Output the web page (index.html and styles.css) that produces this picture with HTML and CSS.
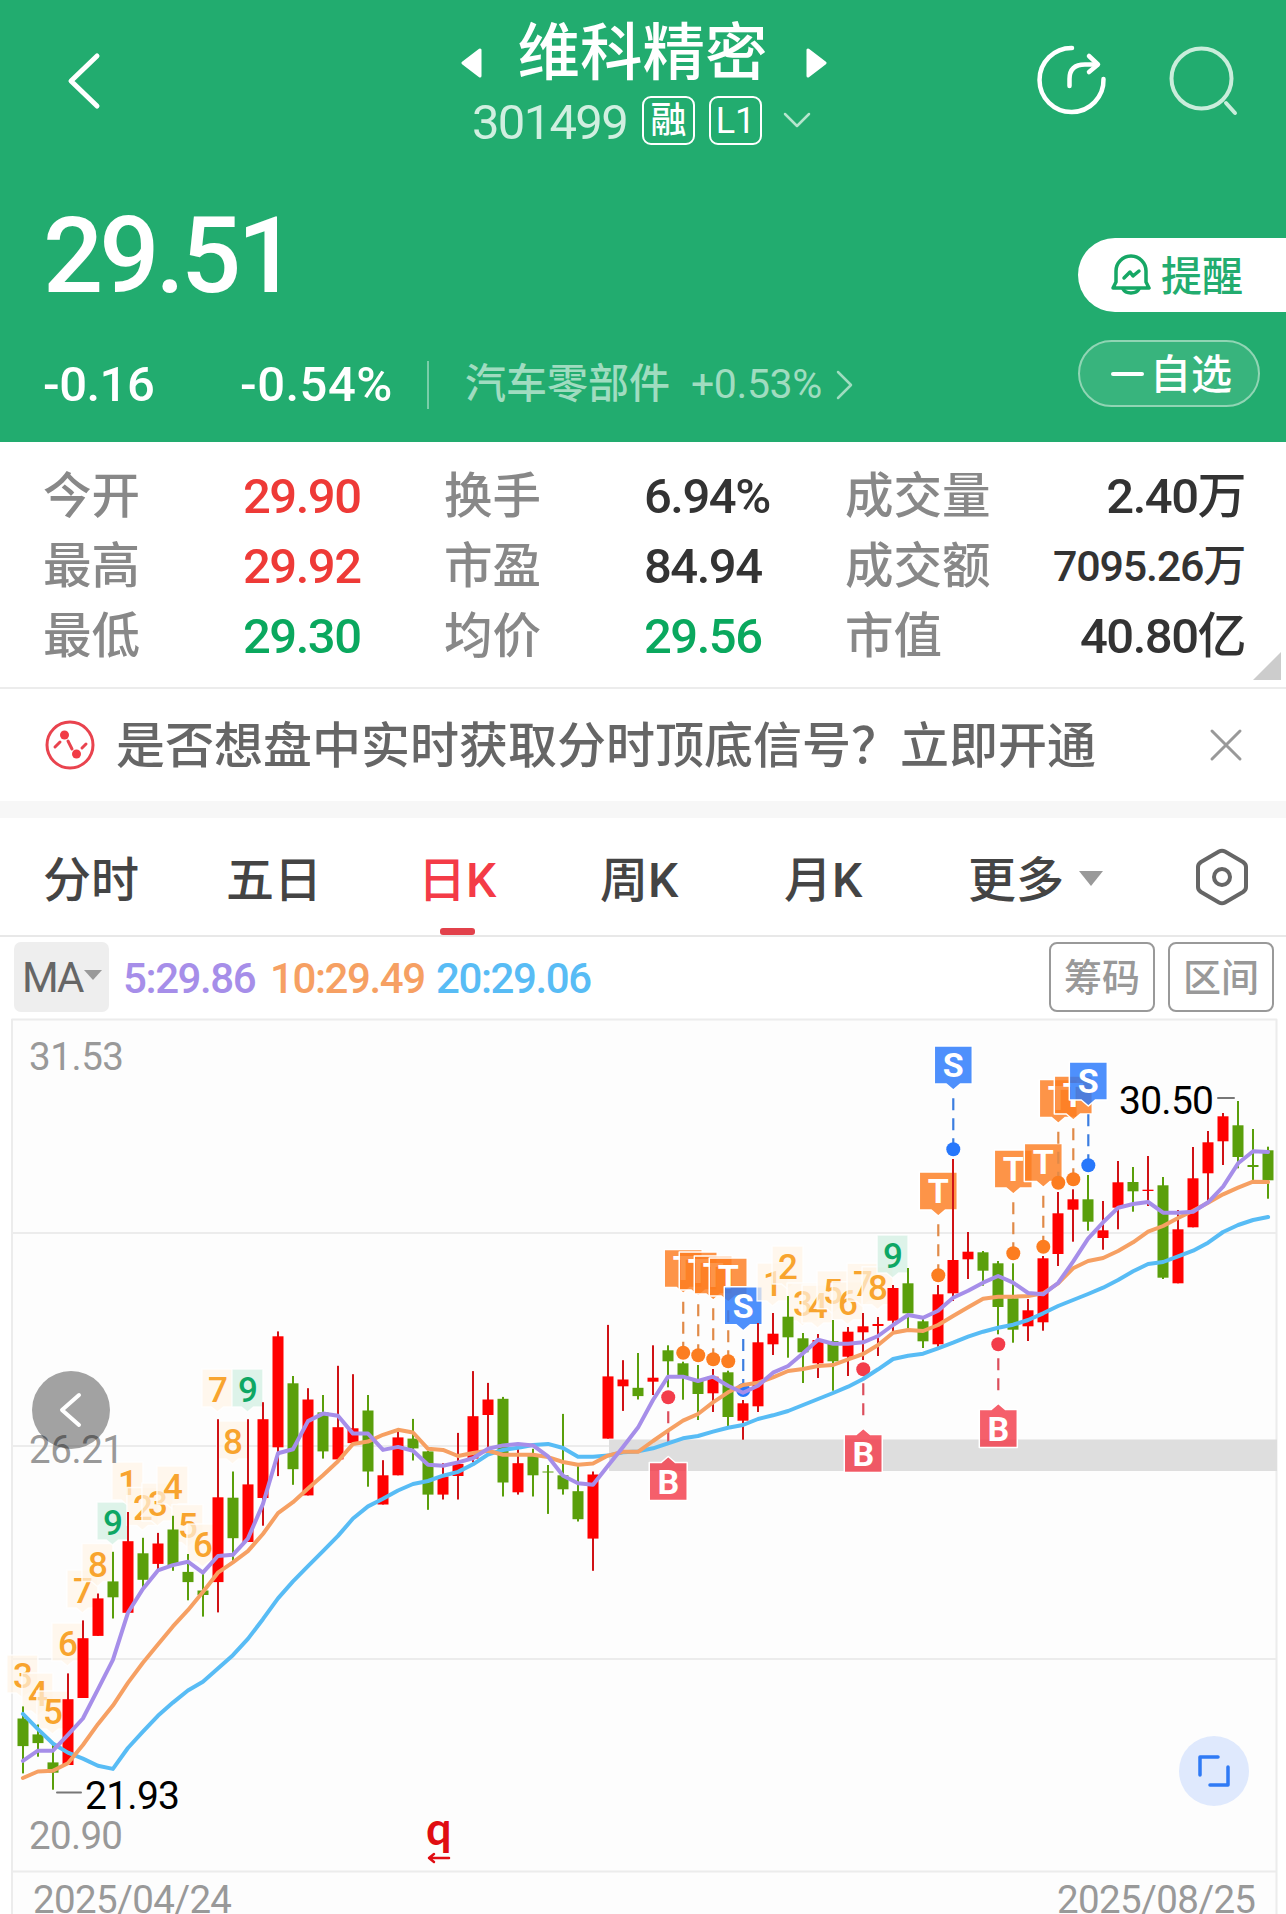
FILE: index.html
```html
<!DOCTYPE html>
<html lang="zh-CN">
<head>
  <meta charset="UTF-8">
  <meta name="viewport" content="width=device-width, initial-scale=1.0">
  <title>维科精密 301499</title>
  <link rel="stylesheet" href="styles.css">
</head>
<body>
  <header class="header">
    <div class="topbar">
      <svg class="back" width="40" height="66" viewBox="64 48 40 66"><path d="M97 56 L71 81 L97 106"/></svg>
      <div class="stock">
        <div class="stock-name">
          <svg width="21" height="30" viewBox="0 0 21 30"><path d="M19 2 V28 L2 15 Z"/></svg>
          <h1>维科精密</h1>
          <svg width="21" height="30" viewBox="0 0 21 30"><path d="M2 2 V28 L19 15 Z"/></svg>
        </div>
        <div class="stock-code">
          <span class="code">301499</span>
          <span class="tag">融</span>
          <span class="tag level">L1</span>
          <svg class="down" width="28" height="16" viewBox="0 0 28 16"><path d="M2 2 L14 14 L26 2"/></svg>
        </div>
      </div>
      <div class="actions">
        <svg class="share" width="70" height="70" viewBox="1036 46 70 70">
          <path d="M1071 49 A32 32 0 1 0 1102.500 80"/>
          <path d="M1068.500 87 V80 Q1068.500 65.500 1084 65.500 H1096"/>
          <path d="M1088 57 L1097 65.500 L1088 73"/>
        </svg>
        <svg class="search" width="70" height="72" viewBox="1167 44 70 72">
          <circle cx="1200.500" cy="77.500" r="30"/>
          <path d="M1225 102 L1234 112"/>
        </svg>
      </div>
    </div>

    <div class="quote">
      <div class="quote-left">
        <div class="price">29.51</div>
        <div class="change">
          <span class="diff">-0.16</span>
          <span class="percent">-0.54%</span>
          <div class="sector">
            <span>汽车零部件</span>
            <span class="sector-rate">+0.53%</span>
            <svg width="18" height="30" viewBox="0 0 18 30"><path d="M2 2 L15 15 L2 28"/></svg>
          </div>
        </div>
      </div>
      <div class="quote-right">
        <div class="btn-remind">
          <svg width="40" height="42" viewBox="0 0 40 42">
            <path d="M5 28 V17 A15 15 0 0 1 35 17 V28 L38 34 H2 Z"/>
            <path d="M12 35 A8.500 6 0 0 0 28 35"/>
            <path d="M13 24 L19 18 L22 22 L28 17"/>
          </svg>
          <span>提醒</span>
        </div>
        <div class="btn-fav"><i class="minus"></i><span>自选</span></div>
      </div>
    </div>
  </header>

  <section class="stats">
    <span class="label">今开</span><span class="up">29.90</span>
    <span class="label">换手</span><span>6.94%</span>
    <span class="label">成交量</span><span class="right">2.40万</span>
    <span class="label">最高</span><span class="up">29.92</span>
    <span class="label">市盈</span><span>84.94</span>
    <span class="label">成交额</span><span class="right small">7095.26万</span>
    <span class="label">最低</span><span class="fall">29.30</span>
    <span class="label">均价</span><span class="fall">29.56</span>
    <span class="label">市值</span><span class="right">40.80亿</span>
    <i class="corner"></i>
  </section>

  <section class="promo">
    <svg class="promo-icon" width="50" height="50" viewBox="45 720 50 50">
      <circle class="ring" cx="70" cy="745" r="23"/>
      <path d="M55 747 L60 742 M68 741 L72 749 M82 748 L86 744"/>
      <circle cx="64.500" cy="735" r="4.500"/>
      <circle cx="76.500" cy="754" r="4.500"/>
    </svg>
    <span class="promo-text">是否想盘中实时获取分时顶底信号？立即开通</span>
    <svg class="close" width="34" height="34" viewBox="0 0 34 34"><path d="M3 3 L31 31 M31 3 L3 31"/></svg>
  </section>

  <nav class="tabs">
    <span>分时</span>
    <span>五日</span>
    <span class="active">日K</span>
    <span>周K</span>
    <span>月K</span>
    <span class="more">更多<i class="caret"></i></span>
    <svg class="setting" width="54" height="60" viewBox="0 0 54 60">
      <path d="M24 4.500 Q27 2.800 30 4.500 L48 15 Q51 17 51 20 V40 Q51 43 48 45 L30 55.500 Q27 57.200 24 55.500 L6 45 Q3 43 3 40 V20 Q3 17 6 15 Z"/>
      <circle cx="27" cy="30" r="8"/>
    </svg>
  </nav>

  <section class="toolbar">
    <span class="ma-select">MA<i class="caret"></i></span>
    <span class="ma ma5">5:29.86</span>
    <span class="ma ma10">10:29.49</span>
    <span class="ma ma20">20:29.06</span>
    <span class="tool first">筹码</span>
    <span class="tool">区间</span>
  </section>

  <svg id="chart" class="chart" width="1286" height="900" viewBox="0 1014 1286 900"></svg>

  <script src="chart.js"></script>
</body>
</html>
```

FILE: styles.css
```css
* {
  box-sizing: border-box;
}
body {
  margin: 0;
  width: 1286px;
  height: 1914px;
  overflow: hidden;
  background: #fff;
  color: #333;
  font-family: Roboto, "Noto Sans CJK SC", sans-serif;
  font-size: 49px;
  font-weight: 500;
}
svg {
  display: block;
  flex: none;
  fill: none;
  stroke-linecap: round;
  stroke-linejoin: round;
}
i {
  display: block;
}

/* header */
.header {
  height: 442px;
  background: #22ac6f;
  color: #fff;
}
.topbar {
  display: grid;
  grid-template-columns: 1fr auto 1fr;
  align-items: center;
  height: 161px;
  padding: 0 48px 0 64px;
}
.back {
  stroke: #fff;
  stroke-width: 5;
}
.stock {
  align-self: start;
  padding-top: 16px;
  margin-left: -15px;
}
.stock-name, .stock-code {
  display: flex;
  align-items: center;
  justify-content: center;
}
.stock-name {
  height: 69px;
}
.stock-name svg {
  fill: #fff;
  stroke: #fff;
  stroke-width: 3;
  margin-top: 24px;
}
h1 {
  margin: 0 38px 0 36px;
  padding-top: 6px;
  font-size: 62.500px;
  font-weight: 500;
  line-height: 69px;
}
.stock-code {
  height: 70px;
}
.code {
  padding-top: 4px;
  margin: 0 15px 0 -4px;
  font-weight: 400;
  letter-spacing: -1.700px;
  color: #d0efe0;
}
.tag {
  width: 53px;
  height: 49px;
  margin-right: 14px;
  border: 2px solid #fff;
  border-radius: 9px;
  font-size: 36px;
  line-height: 46px;
  text-align: center;
}
.level {
  font-weight: 400;
}
.down {
  margin-left: 7px;
  stroke: #b5e5cd;
  stroke-width: 2.500;
}
.actions {
  display: flex;
  justify-content: flex-end;
  gap: 61px;
}
.share {
  stroke: #fff;
  stroke-width: 4.500;
}
.search {
  stroke: #c9eddb;
  stroke-width: 4;
}
.quote {
  display: flex;
  justify-content: space-between;
}
.quote-left {
  padding-left: 43px;
}
.price {
  height: 186px;
  font-size: 106px;
  font-weight: 500;
  line-height: 190px;
  letter-spacing: -4px;
}
.change {
  display: flex;
  align-items: center;
  height: 75px;
  line-height: 77px;
}
.diff {
  width: 197px;
  letter-spacing: -0.500px;
}
.percent {
  width: 187px;
  letter-spacing: 0.500px;
}
.sector {
  display: flex;
  align-items: center;
  height: 48px;
  padding-left: 36px;
  border-left: 2px solid #7acda9;
  font-size: 41px;
  color: #a0dcc0;
}
.sector-rate {
  margin: 0 14px 0 21px;
  font-weight: 400;
  letter-spacing: -0.400px;
}
.sector svg {
  stroke: #a0dcc0;
  stroke-width: 2.500;
}
.quote-right {
  width: 208px;
  padding-top: 77px;
  font-size: 41px;
}
.quote-right span {
  padding-bottom: 5px;
}
.btn-remind {
  display: flex;
  align-items: center;
  gap: 10px;
  height: 74px;
  padding-left: 33px;
  background: #fff;
  border-radius: 37px 0 0 37px;
  color: #22ac6f;
}
.btn-remind svg {
  stroke: #16a765;
  stroke-width: 3.500;
}
.btn-fav {
  display: flex;
  align-items: center;
  gap: 6px;
  width: 182px;
  height: 67px;
  margin-top: 28px;
  padding-left: 31px;
  border: 2px solid #90d5b4;
  border-radius: 34px;
  background: #38b47d;
}
.minus {
  width: 33px;
  height: 4px;
  border-radius: 2px;
  background: #fff;
}

/* day stats */
.stats {
  position: relative;
  display: grid;
  grid-template-columns: 200px 201px 200px 201px 160px 1fr;
  grid-auto-rows: 70px;
  height: 247px;
  padding: 19px 41px 0 43px;
  border-bottom: 2px solid #ececec;
  line-height: 71px;
  letter-spacing: -1.500px;
}
.label {
  font-size: 48.500px;
  line-height: 72px;
  letter-spacing: 0;
  color: #888;
  white-space: nowrap;
}
.up {
  color: #ee3a37;
}
.fall {
  color: #0aa85e;
}
.right {
  text-align: right;
  white-space: nowrap;
}
.small {
  font-size: 43px;
  letter-spacing: -1.200px;
}
.corner {
  position: absolute;
  right: 5px;
  bottom: 7px;
  border-left: 28px solid transparent;
  border-bottom: 28px solid #ccc;
}

/* promo line */
.promo {
  display: flex;
  align-items: center;
  height: 129px;
  padding: 0 43px 17px 45px;
  background: linear-gradient(#fff 112px, #f7f7f7 112px);
  color: #666;
}
.promo-icon {
  stroke: #e9434e;
  stroke-width: 3;
}
.promo-icon circle {
  fill: #f13b45;
  stroke: none;
}
.promo-icon .ring {
  fill: none;
  stroke: #e9434e;
}
.promo-text {
  margin-left: 21px;
  padding-top: 4px;
  line-height: 80px;
}
.close {
  margin-left: auto;
  stroke: #999;
  stroke-width: 3;
}

/* period tabs */
.tabs {
  display: grid;
  grid-template-columns: 183px 192px 182px 184px 184px 226px 54px;
  grid-template-rows: 117px;
  height: 119px;
  padding-left: 43px;
  border-bottom: 2px solid #e8e8e8;
  font-size: 48px;
  line-height: 125px;
  color: #444;
}
.tabs .active {
  position: relative;
  color: #f43b47;
}
.tabs .active::after {
  content: "";
  position: absolute;
  left: 22px;
  bottom: 0;
  width: 35px;
  height: 7px;
  border-radius: 3px;
  background: #e2414b;
}
.more {
  display: flex;
}
.caret {
  border: 12px solid transparent;
  border-top: 15px solid #999;
  border-bottom: 0;
}
.more .caret {
  height: 15px;
  margin: 53px 0 0 15px;
}
.setting {
  margin: 29px 0 0 1px;
  stroke: #666;
  stroke-width: 4;
}

/* indicator bar */
.toolbar {
  display: flex;
  align-items: flex-start;
  height: 77px;
  padding: 5px 12px 0 14px;
  font-size: 42px;
  line-height: 74px;
}
.ma-select {
  display: flex;
  align-items: center;
  width: 95px;
  height: 70px;
  padding: 2px 0 0 8px;
  border-radius: 7px;
  background: #eee;
  color: #666;
  font-weight: 400;
  letter-spacing: -2px;
}
.ma-select .caret {
  margin: -6px 0 0 2px;
  border-width: 10px 9px 0;
}
.ma {
  letter-spacing: -1.400px;
}
.ma5 {
  width: 147px;
  margin-left: 14px;
  color: #a68ee9;
}
.ma10 {
  width: 166px;
  color: #f6a063;
}
.ma20 {
  color: #58bcf5;
}
.tool {
  width: 106px;
  height: 70px;
  margin-left: 13px;
  border: 2px solid #999;
  border-radius: 8px;
  font-size: 38px;
  line-height: 68px;
  text-align: center;
  color: #999;
}
.tool.first {
  margin-left: auto;
}

/* k-line chart */
.chart {
  font-weight: 400;
}
.chart text {
  stroke: none;
}
.frame {
  fill: #fdfdfd;
  stroke: #ececec;
  stroke-width: 2;
}
.grid {
  stroke: #ececec;
  stroke-width: 2;
}
.gap {
  fill: #dedede;
}
.axis {
  font-size: 38.500px;
  fill: #999;
}
.peak {
  font-size: 39px;
  fill: #000;
}
.peak-line {
  stroke: #777;
  stroke-width: 2;
}
.red {
  fill: #f00;
}
.red-wick {
  fill: #d01216;
}
.green, .green-wick {
  fill: #5a9f0b;
}
.line {
  stroke-width: 4;
}
.line5 {
  stroke: #a68ee9;
}
.line10 {
  stroke: #f6a063;
}
.line20 {
  stroke: #58bcf5;
}
.count {
  fill: #fff3e5;
  fill-opacity: .7;
  stroke: #fff;
  stroke-opacity: .8;
  stroke-width: 1.500;
}
.count.nine {
  fill: #ceeee0;
}
.count-num {
  font-size: 35px;
  font-weight: 500;
  text-anchor: middle;
  fill: #f8a42e;
}
.count-num.nine {
  fill: #0ea764;
}
.signal {
  stroke: #fff;
  stroke-width: 1.500;
  fill-opacity: .82;
}
.signal-text {
  font-size: 34px;
  font-weight: 700;
  text-anchor: middle;
  fill: #fff;
}
.sig-T {
  fill: #fc7d20;
}
.sig-S {
  fill: #2777fb;
}
.sig-B {
  fill: #f33c4a;
}
.dash {
  stroke-width: 2.200;
  stroke-dasharray: 12 8;
  stroke-linecap: butt;
}
.dash-T {
  stroke: #e08a48;
}
.dash-S {
  stroke: #3b7de0;
}
.dash-B {
  stroke: #dc4e5c;
}
.ex-mark {
  font-family: Lato, sans-serif;
  font-size: 45px;
  font-weight: 700;
  fill: #e00d12;
}
.ex-arrow {
  stroke: #e00d12;
  stroke-width: 2.500;
}
.prev {
  fill: #000;
  fill-opacity: .36;
}
.prev-arrow {
  stroke: #fff;
  stroke-width: 4;
}
.full {
  fill: #dfe9fd;
}
.full-icon {
  stroke: #2f7af5;
  stroke-width: 3.500;
}
```

FILE: chart.js
```js
const chart = document.getElementById('chart');
const STEP = 15.003;
const X0 = 22.9;
const xAt = i => X0 + i * STEP;

// [color, high, body top, body bottom, low]
const candles = [
  ['g',1706.4,1718.5,1746.1,1773.4], ['g',1724.5,1734.4,1743.1,1756.7], ['g',1744,1762.4,1772.7,1789.7],
  ['r',1673.4,1699.2,1765,1765], ['r',1620.4,1638.2,1698,1698], ['r',1593.5,1598.4,1635.9,1635.9],
  ['g',1551.8,1581.4,1597.3,1618.5], ['r',1512,1541.2,1612.8,1612.8], ['g',1537.8,1553.3,1579.8,1589],
  ['r',1532.9,1543.5,1563.9,1570], ['g',1515.8,1529.5,1565.5,1570.8], ['g',1554,1571.9,1582.1,1600.3],
  ['g',1573.8,1590.5,1595,1616.6], ['r',1419.2,1497.3,1582.1,1612.4], ['g',1471.5,1497.7,1538.2,1560.9],
  ['r',1419.2,1484.4,1542,1542], ['r',1402.2,1419.2,1498,1525.7], ['r',1331.4,1336.3,1447.3,1476.1],
  ['g',1376,1383.3,1469.2,1484.8], ['r',1388.2,1399.5,1495.4,1495.4], ['g',1395,1412.4,1451.4,1458.6],
  ['r',1365.8,1427.2,1459.4,1459.4], ['r',1374.2,1428.3,1443.1,1443.1], ['g',1395,1410.5,1471.5,1486.7],
  ['r',1460.2,1475.3,1504.5,1504.5], ['r',1431.7,1437.4,1475.3,1475.3], ['g',1418.9,1438.6,1448.4,1460.5],
  ['g',1450.7,1451.4,1494.6,1509.8], ['r',1463.2,1476.4,1494.6,1499.5], ['r',1432.9,1463.9,1476,1499.5],
  ['r',1371.1,1416.2,1458.6,1462.4], ['r',1382.9,1399.5,1415,1448.8], ['g',1396.9,1398.8,1482.5,1496.5],
  ['r',1448.8,1463.2,1492.3,1494.6], ['g',1448.8,1455.6,1475.3,1496.5], ['g',1465,1471.5,1472.5,1513.9],
  ['g',1413.9,1475.3,1489.3,1494.6], ['g',1466.2,1491.2,1519.2,1521.5], ['r',1471.5,1474.5,1538.6,1570.8],
  ['r',1324.9,1376.4,1438.6,1438.6], ['r',1360.2,1379.5,1386.3,1410.9], ['g',1353,1387.8,1396.1,1399.5],
  ['r',1345.3,1377.7,1381.7,1395], ['g',1345.3,1350.3,1361.3,1387.3], ['g',1361.7,1363.3,1376.7,1399.7],
  ['g',1365,1380,1394,1420], ['r',1369,1376.7,1393.3,1412], ['g',1370.7,1372.3,1417,1426],
  ['r',1400,1403.3,1420.7,1439.7], ['r',1323,1342.3,1406.3,1412], ['r',1313,1333.7,1344.3,1355],
  ['g',1296,1316.7,1337.3,1357.7], ['g',1333,1338.3,1352.3,1383], ['r',1334,1340,1363.3,1378],
  ['g',1320,1341,1361.3,1390.7], ['r',1327,1331.7,1356.7,1376], ['r',1313,1326.3,1332.3,1360],
  ['r',1317,1324,1326,1356], ['r',1285,1288,1320.7,1331.7], ['g',1268,1283.3,1313.3,1328.3],
  ['g',1319,1321.3,1341.3,1348], ['r',1285,1294.3,1344.3,1346.7], ['r',1159,1260,1293.3,1301],
  ['r',1232,1251.7,1259.3,1279], ['g',1251,1252.3,1270.7,1285.7], ['g',1261,1263.3,1307,1334.3],
  ['g',1263.3,1298.3,1329.7,1342.7], ['r',1299,1310.3,1326.3,1341], ['r',1256,1258.3,1322.3,1330.7],
  ['r',1192,1213.3,1254,1266], ['r',1189.3,1199.3,1209.7,1241.7], ['g',1175,1199.3,1221.7,1230.7],
  ['r',1201,1230.3,1238,1249.7], ['r',1161,1182.3,1207.7,1229.3], ['g',1167,1182,1191.3,1211.7],
  ['r',1156,1189.7,1191,1206], ['g',1177,1185.3,1277.7,1279], ['r',1210,1229.3,1283.3,1283.3],
  ['r',1147,1178.3,1227.3,1227.3], ['r',1131,1142.3,1173.3,1201.7], ['r',1113,1116.3,1141.3,1165],
  ['g',1101,1125.3,1157,1168.3], ['g',1129,1165,1167,1180], ['g',1146.7,1150.3,1180.3,1198.7]
];

const ma5 = [
  1760.9,1750.7,1750.7,1734.8,1718.5,1689.3,1659.8,1612.8,1588.9,1570.4,1565.1,1561.7,1572.7,1556,
  1554.8,1538.6,1504.1,1453.3,1449.2,1421.1,1413.6,1415.8,1433.6,1433.6,1449.9,1446.9,1450.7,1464.7,
  1465.8,1462.4,1458.3,1448.8,1445.4,1443.9,1445.4,1456.4,1475.7,1483.3,1484.8,1465.8,1446.9,1427.6,
  1400,1376.7,1376.7,1381,1376.7,1385.7,1392.7,1385.7,1372.7,1366,1353.3,1339.7,1343.7,1343.7,
  1342.3,1336,1325,1315,1317.7,1310.7,1297.7,1290.7,1282.7,1276,1282.7,1293,1294.3,1283,
  1261.7,1238.7,1222.3,1207.7,1204,1202,1212.7,1212.7,1211.7,1202.3,1186.7,1163.3,1151.3,1152
];
const ma10 = [
  1778,1771.5,1770.8,1763.2,1745,1724.2,1705.6,1682.9,1662.8,1644.6,1626.4,1610.2,1592,1572.7,
  1562.4,1551.1,1534,1513.2,1502.2,1488.6,1475.3,1461.3,1443.9,1441.6,1434.8,1429.8,1432.5,1448.8,
  1449.9,1456,1453,1450.7,1454.8,1454.8,1454.8,1457.1,1462,1464.7,1463.6,1455.6,1451.8,1451.8,
  1441,1430.7,1420.7,1414,1402.3,1392.3,1385,1382.7,1377.3,1371,1369,1366,1365,1359.3,
  1354,1345,1332.7,1330,1331,1325,1316,1307.3,1298.7,1296.7,1296.7,1296,1293.3,1283.3,
  1268.3,1261,1258,1251,1242.3,1231.7,1226,1218,1210.7,1202.7,1194.3,1187.7,1181.7,1182
];
const ma20 = [
  1713.9,1729.1,1743.5,1752.6,1758.6,1765.8,1768.9,1748,1731.7,1715.8,1702.6,1690.5,1681.7,1668.5,
  1655.2,1638.9,1619.2,1598.4,1581.4,1566.2,1551.1,1535.9,1518.5,1506.4,1498.8,1490.5,1484,1481,
  1475.7,1471.9,1464.3,1454.5,1449.9,1447.7,1445,1443.9,1448,1456.7,1456.7,1455.6,1452.2,1451.4,
  1448.3,1443.3,1438.3,1436,1431.7,1427.7,1425,1419,1415.3,1411,1405,1399,1393,1386.7,
  1379,1369.3,1359,1355.7,1353.7,1348.3,1342.7,1336.7,1331.7,1327.7,1324.7,1320,1313.3,1306,
  1300,1294,1287.7,1280,1271.3,1264,1262,1256.3,1250.7,1242.7,1232,1225,1220,1217
];

// [letter, candle index, dot y]
const signals = [
  ['B',43,1397.3], ['T',44,1352.7], ['T',45,1355.3], ['T',46,1359.3], ['T',47,1361.3], ['S',48,1390],
  ['B',56,1369.3], ['T',61,1275.3], ['S',62,1149.3], ['B',65,1344.3], ['T',66,1253.3],
  ['T',68,1246.7], ['T',69,1182.7], ['T',70,1179.3], ['S',71,1165.3]
];

// [number, candle index, box top]
const counts = [
  [3,0,1655], [4,1,1673], [5,2,1691], [6,3,1623], [7,4,1570], [8,5,1543.5], [9,6,1502],
  [1,7,1462], [2,8,1487.4], [3,9,1483], [4,10,1466], [5,11,1504.5], [6,12,1524],
  [7,13,1369], [8,14,1421], [9,15,1369],
  [1,50,1263], [2,51,1246], [3,52,1283], [4,53,1285], [5,54,1270.7], [6,55,1281.7],
  [7,56,1263.3], [8,57,1266.7], [9,58,1235]
];

function rect(cls, x, y, w, h) {
  return `<rect class="${cls}" x="${x}" y="${y}" width="${w}" height="${h}"/>`;
}

function hline(cls, x1, x2, y) {
  return `<path class="${cls}" d="M${x1} ${y} H${x2}"/>`;
}

function label(cls, x, y, length, str) {
  return `<text class="${cls}" x="${x}" y="${y}" textLength="${length}">${str}</text>`;
}

function drawSignal([letter, i, dot]) {
  const x = xAt(i) + 0.2;
  const below = letter === 'B';
  const top = below ? dot + 65.2 : dot - 103.3;
  const l = x - 19, r = x + 19, b = top + 38;
  const shape = below
    ? `M${l} ${top} H${x - 7} L${x} ${top - 6} L${x + 7} ${top} H${r} V${b} H${l} Z`
    : `M${l} ${top} H${r} V${b} H${x + 7} L${x} ${b + 6} L${x - 7} ${b} H${l} Z`;
  const dash = below ? `M${x} ${dot + 14} V${dot + 54}` : `M${x} ${dot - 51} V${dot - 6}`;
  return `<path class="signal sig-${letter}" d="${shape}"/>
    <text class="signal-text" x="${x}" y="${top + 31}">${letter}</text>
    <path class="dash dash-${letter}" d="${dash}"/>
    <circle class="sig-${letter}" cx="${x}" cy="${dot}" r="7"/>`;
}

function drawCount([num, i, top]) {
  const x = xAt(i) - 0.5;
  const nine = num === 9 ? ' nine' : '';
  const l = x - 15.5, r = x + 15.5, b = top + 38;
  return `<path class="count${nine}" d="M${l} ${top} H${r} V${b} H${x + 6} L${x} ${b + 5} L${x - 6} ${b} H${l} Z"/>
    <text class="count-num${nine}" x="${x + 0.5}" y="${top + 33}">${num}</text>`;
}

function drawCandle([color, high, top, bottom, low], i) {
  const name = color === 'r' ? 'red' : 'green';
  const x = Math.round(xAt(i));
  return rect(name + '-wick', x - 1, high, 2, low - high) +
    rect(name, x - 5.5, top, 11, Math.max(bottom - top, 1));
}

function drawLine(cls, values) {
  const points = values.map((y, i) => `${xAt(i).toFixed(1)},${y}`).join(' ');
  return `<polyline class="line ${cls}" points="${points}"/>`;
}

chart.innerHTML = [
  rect('frame', 12, 1019.5, 1264.5, 900),
  [1233, 1446, 1659, 1871.5].map(y => hline('grid', 12, 1276, y)).join(''),
  rect('gap', 609, 1439.5, 668, 31.5),
  signals.map(drawSignal).join(''),
  counts.map(drawCount).join(''),
  candles.map(drawCandle).join(''),
  drawLine('line20', ma20),
  drawLine('line10', ma10),
  drawLine('line5', ma5),
  label('axis', 29, 1070, 95, '31.53'),
  label('axis', 29, 1463, 95, '26.21'),
  label('axis', 29, 1849, 94, '20.90'),
  label('axis', 33, 1913, 199, '2025/04/24'),
  label('axis', 1057, 1913, 199, '2025/08/25'),
  hline('peak-line', 57, 81, 1792.5),
  label('peak', 85, 1809, 95, '21.93'),
  label('peak', 1119, 1114, 95, '30.50'),
  hline('peak-line', 1218, 1234, 1098),
  '<text class="ex-mark" x="426" y="1845">q</text>',
  '<path class="ex-arrow" d="M449 1858 H429 M434 1854 L429 1858 L434 1862"/>',
  '<circle class="prev" cx="71" cy="1410" r="39"/>',
  '<path class="prev-arrow" d="M79 1395 L62 1410 L79 1425"/>',
  '<circle class="full" cx="1214" cy="1771" r="35"/>',
  '<path class="full-icon" d="M1200 1775 V1757 H1218 M1228 1767 V1785 H1210"/>'
].join('');
```
